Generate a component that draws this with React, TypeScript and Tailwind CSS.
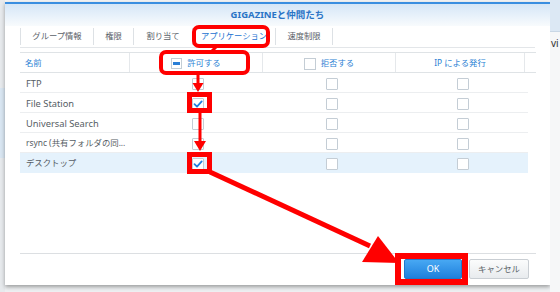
import type { JSX } from "react";

type Row = { name: string; allow: boolean; jp?: boolean; active?: boolean };

const rows: Row[] = [
  { name: "FTP", allow: false },
  { name: "File Station", allow: true },
  { name: "Universal Search", allow: false },
  { name: "rsync (共有フォルダの同...", allow: false, jp: true },
  { name: "デスクトップ", allow: true, jp: true, active: true },
];

const tabs = [
  { label: "グループ情報", w: "w-[73px]" },
  { label: "権限", w: "w-[40px]" },
  { label: "割り当て", w: "w-[59px]" },
  { label: "アプリケーション", w: "w-[83px]", active: true },
  { label: "速度制限", w: "w-[58px]" },
];

function Box({ checked }: { checked?: boolean }): JSX.Element {
  return (
    <div className="w-[12px] h-[12px] border border-[#c4cdd5] bg-white rounded-[1px] flex items-center justify-center">
      {checked && (
        <svg width="10" height="10" viewBox="0 0 10 10">
          <path d="M1.5 5.2 L4 7.6 L8.7 2.4" fill="none" stroke="#1f80e0" strokeWidth="1.8" strokeLinecap="round" strokeLinejoin="round" />
        </svg>
      )}
    </div>
  );
}

function Annotations(): JSX.Element {
  const red = "#ff0000";
  return (
    <svg className="absolute inset-0 pointer-events-none" width="560" height="292" viewBox="0 0 560 292">
      <rect x="194" y="27" width="74" height="19" rx="5" fill="none" stroke={red} strokeWidth="4" />
      <line x1="216" y1="47" x2="211" y2="52" stroke={red} strokeWidth="3" />
      <rect x="161" y="52" width="87" height="21" rx="5" fill="none" stroke={red} strokeWidth="4" />
      <line x1="198" y1="75" x2="198" y2="85" stroke={red} strokeWidth="3" />
      <polygon points="192.5,83 203.5,83 198,92" fill={red} />
      <rect x="189.5" y="94.5" width="20" height="16" fill="none" stroke={red} strokeWidth="5" />
      <line x1="200" y1="113" x2="200" y2="143" stroke={red} strokeWidth="3" />
      <polygon points="194,141 206,141 200,151" fill={red} />
      <rect x="189.5" y="154.5" width="20" height="17" fill="none" stroke={red} strokeWidth="5" />
      <line x1="210" y1="172" x2="370" y2="246" stroke={red} strokeWidth="5" />
      <polygon points="378,236 362,262 399,263" fill={red} />
      <rect x="398" y="256" width="67" height="26" fill="none" stroke={red} strokeWidth="6" />
    </svg>
  );
}

export default function App(): JSX.Element {
  return (
    <div className="relative w-[560px] h-[292px] overflow-hidden flex bg-[#eef0f2] font-['Noto_Sans','Noto_Sans_CJK_JP',sans-serif]">
      <div className="w-[5px] flex flex-col bg-[#e7eaed]">
        <div className="h-[88px]" />
        <div className="h-[70px] bg-[#d9e6f2]" />
      </div>

      <div className="w-[545px] flex flex-col">
        <div className="h-[2px] bg-[#f3f4f6]" />
        <div className="h-[283px] bg-white border-t-2 border-[#3a8ee0] shadow-[0_2px_4px_rgba(0,0,0,0.35)] flex flex-col">
          <div className="h-[22px] bg-gradient-to-b from-[#d5e6f7] to-[#f8fbfd] flex items-center justify-center text-[9.5px] font-bold text-[#2a74c6]">
            GIGAZINEと仲間たち
          </div>

          <div className="mx-[15px] h-[22px] flex items-center border-b border-[#e3e6e9]">
            {tabs.map((t) => (
              <div
                key={t.label}
                className={`${t.w} h-[17px] border-l border-[#dde1e5] last:border-r flex items-center justify-center text-[8.3px] ${t.active ? "text-[#1a72d0]" : "text-[#5b6168]"}`}
              >
                {t.label}
              </div>
            ))}
          </div>

          <div className="mx-[15px] mt-[4px] w-[516px]">
            <div className="h-[21px] grid grid-cols-[110px_133px_133px_129px_11px] border-t border-b border-[#dfe3e6] text-[#2b7fd4] text-[8.4px]">
              <div className="flex items-center pl-[5px] pt-[2px] border-r border-[#e5e8eb]">名前</div>
              <div className="flex items-center justify-center gap-[5px] pt-[2px] border-r border-[#e5e8eb]">
                <div className="w-[11px] h-[11px] border border-[#c4cdd5] flex items-center justify-center">
                  <div className="w-[7px] h-[3px] bg-[#2a7ed6]" />
                </div>
                許可する
              </div>
              <div className="flex items-center justify-center gap-[5px] pt-[2px] border-r border-[#e5e8eb]">
                <div className="w-[12px] h-[12px] border border-[#c4cdd5] bg-white" />
                拒否する
              </div>
              <div className="flex items-center justify-center pt-[2px] border-r border-[#e5e8eb]">IP による発行</div>
              <div />
            </div>

            {rows.map((r) => (
              <div
                key={r.name}
                className={`w-[508px] h-[20px] grid grid-cols-[110px_133px_133px_132px] border-b ${r.active ? "bg-[#e5f2fc] border-[#e5f2fc]" : "border-[#eceef0]"}`}
              >
                <div className={`flex items-center pl-[6px] pt-[2px] text-[#565d64] whitespace-nowrap ${r.jp ? "text-[8.4px]" : "text-[9.3px]"}`}>
                  {r.name}
                </div>
                <div className="flex items-center justify-center pl-[3px] pt-[2px]">
                  <Box checked={r.allow} />
                </div>
                <div className="flex items-center justify-center pl-[4px] pt-[2px]">
                  <Box />
                </div>
                <div className="flex items-center justify-center pl-[2px] pt-[2px]">
                  <Box />
                </div>
              </div>
            ))}
          </div>

          <div className="flex-1" />
          <div className="mx-[15px] w-[516px] border-t border-[#dcdfe2]" />
          <div className="h-[31px] flex items-start justify-end gap-[7px] pr-[21px] pt-[5px]">
            <div className="w-[58px] h-[20px] rounded-[2px] border border-[#1f78cc] bg-gradient-to-b from-[#47a8f3] to-[#1e80dc] text-white text-[9px] flex items-center justify-center">
              OK
            </div>
            <div className="w-[60px] h-[20px] rounded-[2px] border border-[#c9ced3] bg-gradient-to-b from-[#fbfcfc] to-[#e8ebee] text-[#585f66] text-[8.4px] flex items-center justify-center">
              キャンセル
            </div>
          </div>
        </div>
      </div>

      <div className="flex-1 flex flex-col bg-[#f6f7f8] overflow-hidden">
        <div className="h-[32px] bg-[#dce8f4] border-b border-[#c9d7e5]" />
        <div className="mt-[4px] pl-[1px] text-[10px] text-[#333] whitespace-nowrap">vi</div>
      </div>

      <Annotations />
    </div>
  );
}
